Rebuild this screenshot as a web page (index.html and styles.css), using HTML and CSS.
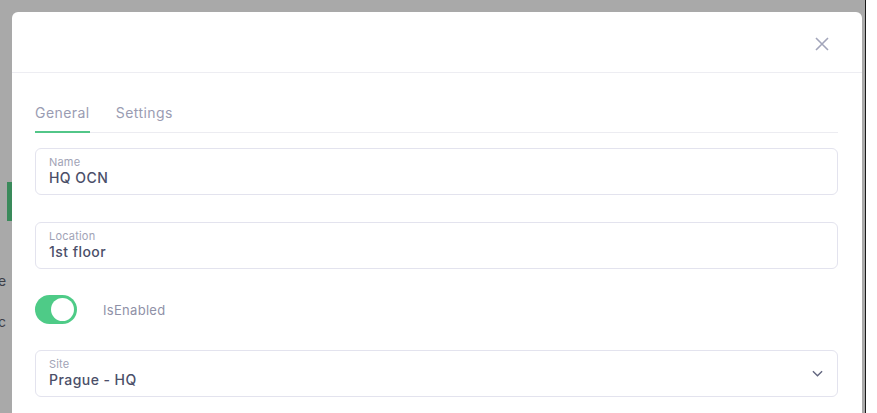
FILE: index.html
```html
<!DOCTYPE html>
<html lang="en">
<head>
<meta charset="UTF-8">
<meta name="viewport" content="width=device-width, initial-scale=1.0">
<title>Edit OCN</title>
<link rel="stylesheet" href="styles.css">
</head>
<body>

<div class="screen">
    <!-- page behind the overlay -->
    <div class="backdrop">
        <div class="backdrop-btn"></div>
        <span class="backdrop-text backdrop-text--1">e</span>
        <span class="backdrop-text backdrop-text--2">c</span>
    </div>

    <!-- modal -->
    <div class="modal">
        <div class="modal-header">
            <button class="modal-close" title="Close">
                <svg viewBox="0 0 14 14"><path d="M1 1 13 13M13 1 1 13"></path></svg>
            </button>
        </div>

        <div class="modal-body">
            <div class="tabs">
                <div class="tab tab--active">General</div>
                <div class="tab">Settings</div>
            </div>

            <div class="form">
                <div class="field">
                    <label class="field-label">Name</label>
                    <div class="field-value">HQ OCN</div>
                </div>

                <div class="field field--spaced">
                    <label class="field-label">Location</label>
                    <div class="field-value">1st floor</div>
                </div>

                <div class="switch-row">
                    <div class="switch switch--on"><span class="switch-knob"></span></div>
                    <span class="switch-label">IsEnabled</span>
                </div>

                <div class="field field--select">
                    <div class="field-text">
                        <label class="field-label">Site</label>
                        <div class="field-value">Prague - HQ</div>
                    </div>
                    <svg class="field-chevron" viewBox="0 0 12 7"><path d="M1 1 6 6 11 1"></path></svg>
                </div>
            </div>
        </div>
    </div>
</div>

</body>
</html>
```

FILE: styles.css
```css
/* --- base --- */
html, body {
    margin: 0;
    height: 100%;
    background: #ffffff;
    overflow: hidden;
}

body {
    font-family: Inter, "Open Sans", "Liberation Sans", sans-serif;
}

/* --- grey overlay + page behind it --- */
.screen {
    position: relative;
    width: 865px;
    height: 413px;
    background-color: #a9a9a9;
    border-right: 1px solid #1a1a1a;
    overflow: hidden;
}

.backdrop-btn {
    position: absolute;
    left: 7px;
    top: 182px;
    width: 6px;
    height: 39px;
    background-color: #3a8a5b;
}

.backdrop-text {
    position: absolute;
    left: -2px;
    font-size: 14px;
    color: #3d3f48;
}

.backdrop-text--1 { top: 272px; }
.backdrop-text--2 { top: 313px; }

/* --- modal --- */
.modal {
    position: absolute;
    left: 12px;
    top: 12px;
    width: 850px;
    height: 420px;
    background: #ffffff;
    border-radius: 6px 6px 0 0;
}

.modal-header {
    display: flex;
    justify-content: flex-end;
    align-items: center;
    height: 61px;
    padding: 4px 31px 0 0;
    border-bottom: 1px solid #ededf2;
    box-sizing: border-box;
}

.modal-close {
    display: flex;
    align-items: center;
    justify-content: center;
    width: 18px;
    height: 18px;
    padding: 0;
    border: none;
    background: none;
    cursor: pointer;
}

.modal-close svg {
    width: 14px;
    height: 14px;
    stroke: #a2a5ba;
    stroke-width: 1.6;
    fill: none;
}

.modal-body {
    padding: 30px 24px 0 23px;
}

/* --- tabs --- */
.tabs {
    display: flex;
    gap: 26px;
    border-bottom: 1px solid #ececf1;
}

.tab {
    padding-bottom: 8px;
    font-size: 14px;
    line-height: 20px;
    letter-spacing: 0.45px;
    color: #9a9cb2;
    border-bottom: 2px solid transparent;
    margin-bottom: -1px;
    cursor: pointer;
}

.tab--active {
    border-bottom-color: #52c688;
}

/* --- form --- */
.form {
    display: flex;
    flex-direction: column;
    gap: 26px;
    margin-top: 15px;
}

.field {
    padding: 6px 13px 7px;
    border: 1px solid #e3e3ee;
    border-radius: 6px;
}

.field--spaced {
    margin-top: 1px;
}

.field--select {
    display: flex;
    align-items: center;
    justify-content: space-between;
    padding-right: 14px;
}

.field-label {
    display: block;
    font-size: 11px;
    line-height: 14px;
    letter-spacing: 0.2px;
    color: #a1a3b6;
}

.field-value {
    font-size: 14px;
    font-weight: 500;
    line-height: 18px;
    letter-spacing: 0.45px;
    color: #4b4f69;
}

.field-chevron {
    width: 11px;
    height: 7px;
    stroke: #62667f;
    stroke-width: 1.5;
    fill: none;
}

/* --- switch --- */
.switch-row {
    display: flex;
    align-items: center;
    gap: 26px;
    height: 29px;
}

.switch {
    display: flex;
    align-items: center;
    width: 42px;
    height: 29px;
    padding: 3px;
    border-radius: 15px;
    background-color: #cfd1dc;
    box-sizing: border-box;
}

.switch--on {
    justify-content: flex-end;
    background-color: #4ecb87;
}

.switch-knob {
    width: 23px;
    height: 23px;
    border-radius: 50%;
    background: #ffffff;
}

.switch-label {
    font-size: 13px;
    letter-spacing: 0.3px;
    color: #8f91a7;
}
```
